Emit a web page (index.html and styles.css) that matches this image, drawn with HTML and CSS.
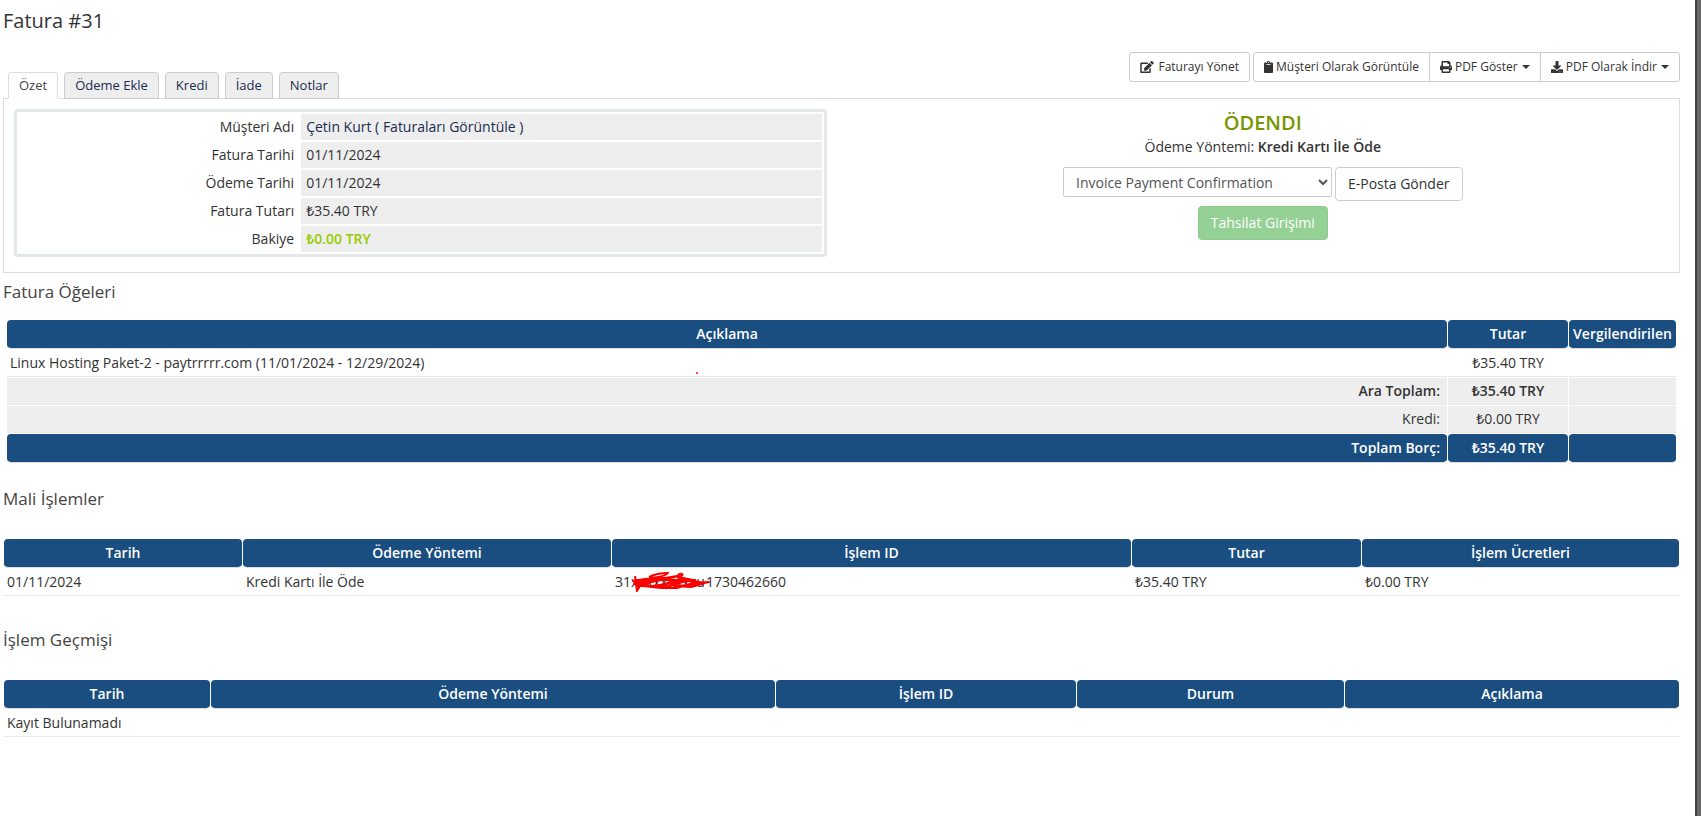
FILE: index.html
```html
<!DOCTYPE html>
<html lang="tr">
<head>
<meta charset="utf-8">
<title>Fatura #31</title>
<link rel="stylesheet" href="styles.css">
</head>
<body>
<div class="page">
<main class="content">
  <h1 class="page-title">Fatura #31</h1>

  <div class="topbar">
    <nav class="tabs">
      <a class="tab active" href="#ozet">Özet</a>
      <a class="tab" href="#odeme">Ödeme Ekle</a>
      <a class="tab" href="#kredi">Kredi</a>
      <a class="tab" href="#iade">İade</a>
      <a class="tab" href="#notlar">Notlar</a>
    </nav>
    <div class="toolbar">
      <button class="btn btn-tool" type="button"><svg class="icon icon-edit" viewBox="0 0 576 512"><path d="M402.6 83.2l90.2 90.2c3.8 3.8 3.8 10 0 13.8L274.4 405.6l-92.8 10.3c-12.4 1.4-22.9-9.1-21.5-21.5l10.3-92.8L388.8 83.2c3.8-3.8 10-3.8 13.8 0zm162-22.9l-48.8-48.8c-15.2-15.2-39.9-15.2-55.2 0l-35.4 35.4c-3.8 3.8-3.8 10 0 13.8l90.2 90.2c3.8 3.8 10 3.8 13.8 0l35.4-35.4c15.2-15.3 15.2-40 0-55.2zM384 346.2V448H64V128h229.8c3.2 0 6.2-1.3 8.5-3.5l40-40c7.6-7.6 2.2-20.5-8.5-20.5H48C21.5 64 0 85.5 0 112v352c0 26.5 21.5 48 48 48h352c26.5 0 48-21.5 48-48V306.2c0-10.7-12.9-16-20.5-8.5l-40 40c-2.2 2.3-3.5 5.3-3.5 8.5z"/></svg>Faturayı Yönet</button>
      <div class="btn-group">
        <button class="btn btn-tool" type="button"><svg class="icon icon-clipboard" viewBox="0 0 384 512"><path d="M384 112v352c0 26.51-21.49 48-48 48H48c-26.51 0-48-21.49-48-48V112c0-26.51 21.49-48 48-48h80c0-35.29 28.71-64 64-64s64 28.71 64 64h80c26.51 0 48 21.49 48 48zM192 40c-13.255 0-24 10.745-24 24s10.745 24 24 24 24-10.745 24-24-10.745-24-24-24m96 114v-20a6 6 0 0 0-6-6H102a6 6 0 0 0-6 6v20a6 6 0 0 0 6 6h180a6 6 0 0 0 6-6z"/></svg>Müşteri Olarak Görüntüle</button>
        <button class="btn btn-tool" type="button"><svg class="icon" viewBox="0 0 512 512"><path d="M448 192V77.25c0-8.49-3.37-16.62-9.37-22.63L393.37 9.37c-6-6-14.14-9.37-22.63-9.37H96C78.33 0 64 14.33 64 32v160c-35.35 0-64 28.65-64 64v112c0 8.84 7.16 16 16 16h48v96c0 17.67 14.33 32 32 32h320c17.67 0 32-14.33 32-32v-96h48c8.84 0 16-7.16 16-16V256c0-35.35-28.65-64-64-64zm-64 256H128v-96h256v96zm0-224H128V64h192v48c0 8.84 7.16 16 16 16h48v96zm48 72c-13.25 0-24-10.75-24-24 0-13.26 10.75-24 24-24s24 10.74 24 24c0 13.25-10.75 24-24 24z"/></svg>PDF Göster<span class="caret"></span></button>
        <button class="btn btn-tool" type="button"><svg class="icon" viewBox="0 0 512 512"><path d="M216 0h80c13.3 0 24 10.7 24 24v168h87.7c17.8 0 26.7 21.5 14.1 34.1L269.7 378.3c-7.5 7.5-19.8 7.5-27.3 0L90.1 226.1c-12.6-12.6-3.7-34.1 14.1-34.1H192V24c0-13.3 10.7-24 24-24zm296 376v112c0 13.3-10.7 24-24 24H24c-13.3 0-24-10.7-24-24V376c0-13.3 10.7-24 24-24h146.7l49 49c20.1 20.1 52.5 20.1 72.6 0l49-49H488c13.3 0 24 10.7 24 24zm-124 88c0-11-9-20-20-20s-20 9-20 20 9 20 20 20 20-9 20-20zm64 0c0-11-9-20-20-20s-20 9-20 20 9 20 20 20 20-9 20-20z"/></svg>PDF Olarak İndir<span class="caret"></span></button>
      </div>
    </div>
  </div>

  <section class="panel">
    <div class="summary-box">
      <table class="summary">
        <tr><th scope="row">Müşteri Adı</th><td><a href="#musteri">Çetin Kurt</a> <a href="#faturalar">( Faturaları Görüntüle )</a></td></tr>
        <tr><th scope="row">Fatura Tarihi</th><td>01/11/2024</td></tr>
        <tr><th scope="row">Ödeme Tarihi</th><td>01/11/2024</td></tr>
        <tr><th scope="row">Fatura Tutarı</th><td>₺35.40 TRY</td></tr>
        <tr><th scope="row">Bakiye</th><td class="balance">₺0.00 TRY</td></tr>
      </table>
    </div>
    <div class="status">
      <div class="status-name">ÖDENDI</div>
      <div class="method">Ödeme Yöntemi: <strong>Kredi Kartı İle Öde</strong></div>
      <form class="mail-form">
        <select class="mail-select" aria-label="E-Posta"><option>Invoice Payment Confirmation</option></select>
        <button class="btn" type="button">E-Posta Gönder</button>
      </form>
      <button class="btn btn-success" type="button" disabled>Tahsilat Girişimi</button>
    </div>
  </section>

  <h2 class="section-title">Fatura Öğeleri</h2>
  <div class="items">
    <table class="grid">
      <colgroup><col><col class="col-amount"><col class="col-tax"></colgroup>
      <thead><tr><th>Açıklama</th><th>Tutar</th><th>Vergilendirilen</th></tr></thead>
      <tbody>
        <tr><td class="item-cell">Linux Hosting Paket-2 - paytrrrrr.com (11/01/2024 - 12/29/2024)<svg class="dot" viewBox="0 0 2 2"><circle cx="1" cy="1" r="1"/></svg></td><td class="center">₺35.40 TRY</td><td></td></tr>
        <tr class="subtotal strong"><td class="right">Ara Toplam:</td><td class="center">₺35.40 TRY</td><td></td></tr>
        <tr class="subtotal"><td class="right">Kredi:</td><td class="center">₺0.00 TRY</td><td></td></tr>
        <tr><th class="right">Toplam Borç:</th><th>₺35.40 TRY</th><th></th></tr>
      </tbody>
    </table>
  </div>

  <h2 class="section-title spaced">Mali İşlemler</h2>
  <table class="grid">
    <colgroup><col class="t-date"><col class="t-method"><col class="t-id"><col class="t-amount"><col class="t-fee"></colgroup>
    <thead><tr><th>Tarih</th><th>Ödeme Yöntemi</th><th>İşlem ID</th><th>Tutar</th><th>İşlem Ücretleri</th></tr></thead>
    <tbody><tr><td>01/11/2024</td><td>Kredi Kartı İle Öde</td>
      <td>31<span class="redacted">xxxxxxxxcu<svg class="scribble" viewBox="0 0 80 22"><path d="M4 4L6 19L10 12L2 9L14 7L30 6L8 10L3 12L24 9L44 5L16 11L5 14L30 14L48 8L24 8L12 14L30 16L52 10L64 8L40 11L22 14L46 16L62 11L78 10L60 13L44 14L60 15L74 11L56 8L44 8L34 12M18 5C24 2 32 1 37 1C34 5 26 5 20 6L34 6L46 4C49 0 54 2 50 4C46 5 44 6 52 6L62 8"/></svg></span>1730462660</td>
      <td>₺35.40 TRY</td><td>₺0.00 TRY</td></tr></tbody>
  </table>

  <h2 class="section-title spaced history">İşlem Geçmişi</h2>
  <table class="grid">
    <colgroup><col class="h-date"><col class="h-method"><col class="h-id"><col class="h-status"><col class="h-desc"></colgroup>
    <thead><tr><th>Tarih</th><th>Ödeme Yöntemi</th><th>İşlem ID</th><th>Durum</th><th>Açıklama</th></tr></thead>
    <tbody><tr><td colspan="5">Kayıt Bulunamadı</td></tr></tbody>
  </table>
</main>
<div class="edge"></div>
</div>
</body>
</html>
```
FILE: styles.css
```css
* { box-sizing: border-box; }

body {
  margin: 0;
  background: #fff;
  color: #333;
  font: 14px/20px "Open Sans", "Noto Sans", sans-serif;
}

a { color: #1a2b50; text-decoration: none; }

.page { display: flex; min-height: 100vh; }
.content { flex: 1; min-width: 0; padding: 8px 15px 0 3px; }
.edge { width: 6px; background: #6b6868; border-left: 2px solid #444; }

.page-title { margin: 0; font-size: 20px; line-height: 26px; font-weight: 400; }

.topbar {
  display: flex;
  justify-content: space-between;
  align-items: flex-end;
  margin-top: 18px;
}
.tabs { display: flex; gap: 6px; padding-left: 5px; margin-bottom: -1px; }
.tab {
  height: 27px;
  padding: 2px 10px;
  border: 1px solid #ccc;
  border-radius: 4px 4px 0 0;
  background: #eee;
  font-size: 13px;
}
.tab.active { background: #fff; border-color: #ddd; border-bottom-color: #fff; color: #444; }

.toolbar { display: flex; gap: 3px; padding-bottom: 16px; }
.btn-group { display: flex; }
.btn-group .btn { border-radius: 0; }
.btn-group .btn + .btn { margin-left: -1px; }
.btn-group .btn:first-child { border-radius: 3px 0 0 3px; }
.btn-group .btn:last-child { border-radius: 0 3px 3px 0; }

.btn {
  height: 34px;
  padding: 0 12px;
  border: 1px solid #ccc;
  border-radius: 4px;
  background: #fff;
  color: #333;
  font: inherit;
}
.btn-tool {
  display: flex;
  align-items: center;
  height: 30px;
  padding: 0 10px;
  font-size: 12px;
  border-radius: 3px;
}
.icon { width: 12px; height: 12px; margin-right: 3px; fill: #333; }
.icon-edit { width: 14px; margin-right: 4px; }
.icon-clipboard { width: 9px; }
.caret {
  margin-left: 4px;
  border: 4px solid transparent;
  border-top-color: #333;
  border-bottom: 0;
}
.btn-success { background: #95d195; border-color: #8bcc8b; color: #fff; font-weight: 500; }

.panel {
  display: grid;
  grid-template-columns: 1fr 1fr;
  gap: 30px;
  padding: 10px 10px 15px;
  border: 1px solid #ddd;
}
.summary-box { border: 3px solid #e2e7e9; border-radius: 4px; }
.summary { width: 100%; border-spacing: 2px; }
.summary th, .summary td { height: 26px; padding: 3px 5px; }
.summary th { width: 35%; text-align: right; font-weight: 400; }
.summary td { background: #eee; }
.summary .balance { color: #9c0; font-weight: 600; }

.status { text-align: center; }
.status-name { color: #779500; font-size: 20px; line-height: 28px; font-weight: 600; }
.method strong { font-weight: 600; }
.mail-form { display: flex; justify-content: center; align-items: flex-start; gap: 3px; margin: 10px 0 5px; }
.mail-select {
  width: 269px;
  height: 30px;
  padding: 0 8px;
  border: 1px solid #ccc;
  border-radius: 2px;
  background: #fff;
  color: #555;
  font: inherit;
}

.section-title { margin: 0; padding: 7px 0 9px; font-size: 17px; line-height: 24px; font-weight: 400; color: #444; }
.section-title.spaced { padding: 23px 0 27px; }
.section-title.history { margin-top: 8px; }

.items { padding: 6px 3px 0; }
.grid { width: 100%; table-layout: fixed; border-spacing: 1px; }
.grid th {
  height: 29px;
  padding: 4px 6px;
  border-bottom: 1px solid #ddd;
  border-radius: 4px;
  background: #1a4d80;
  background-clip: padding-box;
  color: #fff;
  font-weight: 600;
  text-align: center;
  white-space: nowrap;
}
.grid td { height: 27px; padding: 3px; border-bottom: 1px solid #e8e8e8; }
.grid .right { padding-right: 7px; text-align: right; }
.grid .center { text-align: center; }
.subtotal td { background: #eee; }
.strong td { font-weight: 600; }
.col-amount { width: 120px; }
.col-tax { width: 107px; }
.grid th:last-child { padding: 4px 2px; }

.item-cell { position: relative; }
.dot { position: absolute; left: 689px; bottom: 2px; width: 2px; height: 2px; fill: #f00; }

.t-date { width: 238px; }
.t-method { width: 368px; }
.t-id { width: 519px; }
.t-amount { width: 229px; }
.h-date { width: 206px; }
.h-method { width: 564px; }
.h-id { width: 300px; }
.h-status { width: 267px; }

.redacted { position: relative; display: inline-block; width: 75px; height: 20px; vertical-align: top; }
.scribble {
  position: absolute;
  left: 0;
  top: 0;
  width: 80px;
  height: 22px;
  overflow: visible;
  fill: none;
  stroke: #f00;
  stroke-width: 2;
  stroke-linejoin: round;
}
```
